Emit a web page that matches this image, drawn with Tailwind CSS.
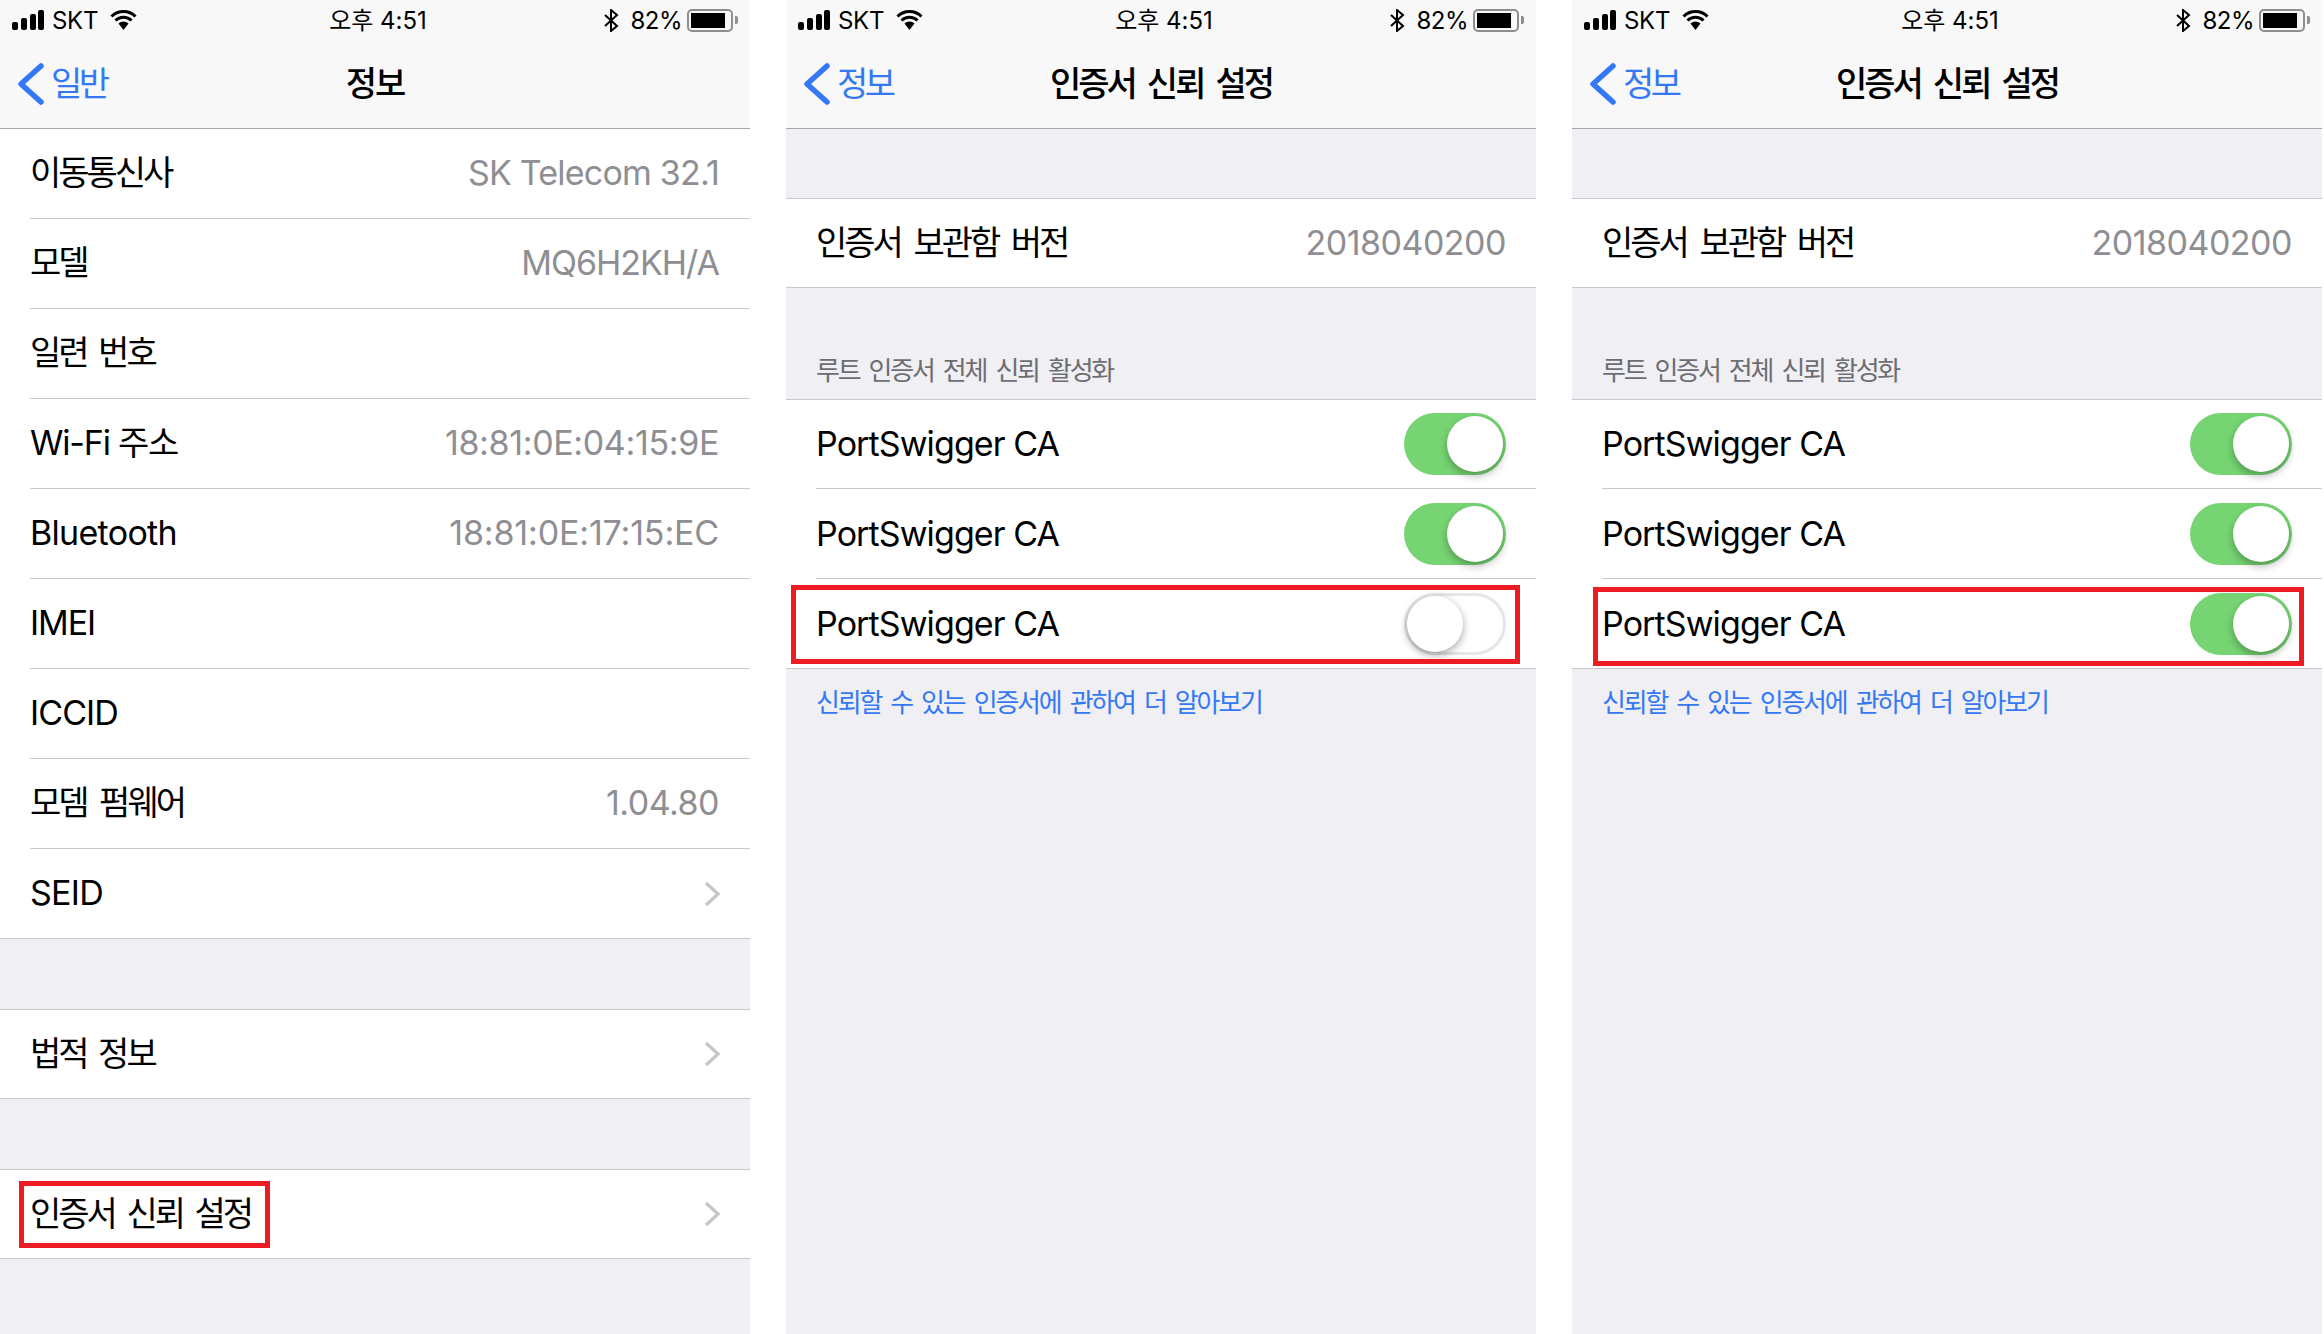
<!DOCTYPE html>
<html lang="ko">
<head>
<meta charset="UTF-8">
<title>인증서 신뢰 설정</title>
<script src="https://cdn.jsdelivr.net/npm/@tailwindcss/browser@4"></script>
</head>
<body class="bg-white font-[Inter,'Noto_Sans_CJK_KR',sans-serif] text-black overflow-hidden">
<div class="flex gap-[36px] h-[1334px]">

  <!-- 정보 -->
  <section class="w-[750px] bg-[#efeff4] flex flex-col">
    <header class="h-[129px] bg-[#f8f8f8] border-b border-[#a7a7aa] shrink-0">
      <div class="h-[40px] grid grid-cols-3 items-center pl-[12px] pr-[12px] text-[24px] leading-none">
        <div class="flex items-center">
          <svg width="34" height="20" viewBox="0 0 34 20" fill="#000"><rect x="0" y="12" width="6" height="8" rx="2"/><rect x="9" y="8" width="6" height="12" rx="2"/><rect x="18" y="4" width="6" height="16" rx="2"/><rect x="26" y="0" width="6" height="20" rx="2"/></svg>
          <span class="ml-[6px] pt-[2px] tracking-[-0.3px]">SKT</span>
          <svg class="ml-[12px]" width="27" height="20" viewBox="0 0 27 20"><path d="M1.5 6.5a17 17 0 0 1 24 0M5.5 10.5a11.5 11.5 0 0 1 16 0" fill="none" stroke="#000" stroke-width="3"/><path d="M8.5 13.5a7 7 0 0 1 10 0L13.5 20z" fill="#000"/></svg>
        </div>
        <div class="text-center pl-[6px] pt-[2px]">오후 4:51</div>
        <div class="flex items-center justify-end">
          <svg width="15" height="23" viewBox="0 0 15 23"><path d="M1 6l12 11-6 5V1l6 5L1 17" fill="none" stroke="#000" stroke-width="2"/></svg>
          <span class="ml-[11px] pt-[2px] tracking-[-0.5px]">82%</span>
          <div class="ml-[5px] w-[46px] h-[23px] border-2 border-[#8e8e8e] rounded-[5px] p-[2px]"><div class="w-[34px] h-full bg-black"></div></div>
          <div class="ml-[2px] w-[3px] h-[8px] bg-[#8e8e8e] rounded-r-[2px]"></div>
        </div>
      </div>
      <div class="h-[87px] grid grid-cols-[1fr_auto_1fr] items-center pl-[18px]">
        <div class="flex items-center text-[34px] text-[#3478f6]">
          <svg width="26" height="42" viewBox="0 0 26 42"><path d="M23 3L3 21l20 18" fill="none" stroke="#3478f6" stroke-width="5.5" stroke-linecap="round" stroke-linejoin="round"/></svg>
          <span class="ml-[7px] tracking-[-3.5px]">일반</span>
        </div>
        <h1 class="text-[34px] font-medium tracking-[-2px] pr-[18px]">정보</h1>
        <div></div>
      </div>
    </header>

    <div class="bg-white">
      <div class="h-[90px] pl-[30px] flex"><div class="flex-1 flex items-center justify-between pr-[31px] pb-[2px] border-b border-[#c8c7cc] text-[34px]"><span class="tracking-[-3px]">이동통신사</span><span class="text-[#8e8e93] tracking-[-0.8px]">SK Telecom 32.1</span></div></div>
      <div class="h-[90px] pl-[30px] flex"><div class="flex-1 flex items-center justify-between pr-[31px] pb-[2px] border-b border-[#c8c7cc] text-[34px]"><span class="tracking-[-3px]">모델</span><span class="text-[#8e8e93] tracking-[-1px]">MQ6H2KH/A</span></div></div>
      <div class="h-[90px] pl-[30px] flex"><div class="flex-1 flex items-center justify-between pr-[31px] pb-[2px] border-b border-[#c8c7cc] text-[34px]"><span class="tracking-[-3px] [word-spacing:5px]">일련 번호</span></div></div>
      <div class="h-[90px] pl-[30px] flex"><div class="flex-1 flex items-center justify-between pr-[31px] pb-[2px] border-b border-[#c8c7cc] text-[34px]"><span class="tracking-[-1.2px]">Wi-Fi 주소</span><span class="text-[#8e8e93] tracking-[-0.35px]">18:81:0E:04:15:9E</span></div></div>
      <div class="h-[90px] pl-[30px] flex"><div class="flex-1 flex items-center justify-between pr-[31px] pb-[2px] border-b border-[#c8c7cc] text-[34px]"><span class="tracking-[-0.7px]">Bluetooth</span><span class="text-[#8e8e93] tracking-[-0.15px]">18:81:0E:17:15:EC</span></div></div>
      <div class="h-[90px] pl-[30px] flex"><div class="flex-1 flex items-center justify-between pr-[31px] pb-[2px] border-b border-[#c8c7cc] text-[34px]"><span class="tracking-[-1.1px]">IMEI</span></div></div>
      <div class="h-[90px] pl-[30px] flex"><div class="flex-1 flex items-center justify-between pr-[31px] pb-[2px] border-b border-[#c8c7cc] text-[34px]"><span class="tracking-[-0.9px]">ICCID</span></div></div>
      <div class="h-[90px] pl-[30px] flex"><div class="flex-1 flex items-center justify-between pr-[31px] pb-[2px] border-b border-[#c8c7cc] text-[34px]"><span class="tracking-[-3px] [word-spacing:6px]">모뎀 펌웨어</span><span class="text-[#8e8e93] tracking-[-0.5px]">1.04.80</span></div></div>
      <div class="h-[90px] pl-[30px] flex items-center justify-between pr-[30px] border-b border-[#c8c7cc] text-[34px]"><span class="tracking-[-0.7px] pb-[2px]">SEID</span>
        <svg width="16" height="26" viewBox="0 0 16 26"><path d="M2 2l12 11L2 24" fill="none" stroke="#c7c7cc" stroke-width="3.5"/></svg>
      </div>
    </div>

    <div class="h-[70px] shrink-0"></div>
    <div class="h-[90px] bg-white border-t border-b border-[#c8c7cc] pl-[30px] pr-[30px] flex items-center justify-between text-[34px]"><span class="tracking-[-3px] [word-spacing:5px] pb-[2px]">법적 정보</span>
      <svg width="16" height="26" viewBox="0 0 16 26"><path d="M2 2l12 11L2 24" fill="none" stroke="#c7c7cc" stroke-width="3.5"/></svg>
    </div>
    <div class="h-[70px] shrink-0"></div>
    <div class="relative h-[90px] bg-white border-t border-b border-[#c8c7cc] pl-[30px] pr-[30px] flex items-center justify-between text-[34px]"><span class="tracking-[-3px] [word-spacing:5px] pb-[2px]">인증서 신뢰 설정</span>
      <svg width="16" height="26" viewBox="0 0 16 26"><path d="M2 2l12 11L2 24" fill="none" stroke="#c7c7cc" stroke-width="3.5"/></svg>
      <div class="absolute left-[19px] top-[11px] w-[251px] h-[67px] border-[5px] border-[#ed1c24]"></div>
    </div>
  </section>

  <!-- 인증서 신뢰 설정 (해제) -->
  <section class="w-[750px] bg-[#efeff4] flex flex-col">
    <header class="h-[129px] bg-[#f8f8f8] border-b border-[#a7a7aa] shrink-0">
      <div class="h-[40px] grid grid-cols-3 items-center pl-[12px] pr-[12px] text-[24px] leading-none">
        <div class="flex items-center">
          <svg width="34" height="20" viewBox="0 0 34 20" fill="#000"><rect x="0" y="12" width="6" height="8" rx="2"/><rect x="9" y="8" width="6" height="12" rx="2"/><rect x="18" y="4" width="6" height="16" rx="2"/><rect x="26" y="0" width="6" height="20" rx="2"/></svg>
          <span class="ml-[6px] pt-[2px] tracking-[-0.3px]">SKT</span>
          <svg class="ml-[12px]" width="27" height="20" viewBox="0 0 27 20"><path d="M1.5 6.5a17 17 0 0 1 24 0M5.5 10.5a11.5 11.5 0 0 1 16 0" fill="none" stroke="#000" stroke-width="3"/><path d="M8.5 13.5a7 7 0 0 1 10 0L13.5 20z" fill="#000"/></svg>
        </div>
        <div class="text-center pl-[6px] pt-[2px]">오후 4:51</div>
        <div class="flex items-center justify-end">
          <svg width="15" height="23" viewBox="0 0 15 23"><path d="M1 6l12 11-6 5V1l6 5L1 17" fill="none" stroke="#000" stroke-width="2"/></svg>
          <span class="ml-[11px] pt-[2px] tracking-[-0.5px]">82%</span>
          <div class="ml-[5px] w-[46px] h-[23px] border-2 border-[#8e8e8e] rounded-[5px] p-[2px]"><div class="w-[34px] h-full bg-black"></div></div>
          <div class="ml-[2px] w-[3px] h-[8px] bg-[#8e8e8e] rounded-r-[2px]"></div>
        </div>
      </div>
      <div class="h-[87px] grid grid-cols-[1fr_auto_1fr] items-center pl-[18px]">
        <div class="flex items-center text-[34px] text-[#3478f6]">
          <svg width="26" height="42" viewBox="0 0 26 42"><path d="M23 3L3 21l20 18" fill="none" stroke="#3478f6" stroke-width="5.5" stroke-linecap="round" stroke-linejoin="round"/></svg>
          <span class="ml-[7px] tracking-[-3.5px]">정보</span>
        </div>
        <h1 class="text-[34px] font-medium tracking-[-3px] [word-spacing:6px] pr-[18px]">인증서 신뢰 설정</h1>
        <div></div>
      </div>
    </header>

    <div class="h-[69px] shrink-0"></div>
    <div class="h-[90px] bg-white border-t border-b border-[#c8c7cc] px-[30px] flex items-center justify-between text-[34px]"><span class="tracking-[-3px] [word-spacing:6px] pb-[2px]">인증서 보관함 버전</span><span class="text-[#8e8e93] tracking-[-0.5px] pb-[2px]">2018040200</span></div>
    <div class="h-[111px] shrink-0 flex items-end pl-[30px] pb-[10px] text-[26px] leading-[36px] text-[#6d6d72] tracking-[-2.2px] [word-spacing:4px]">루트 인증서 전체 신뢰 활성화</div>
    <div class="bg-white border-t border-b border-[#c8c7cc]">
      <div class="h-[89px] pl-[30px] flex"><div class="flex-1 flex items-center justify-between pr-[30px] border-b border-[#c8c7cc] text-[34px]"><span class="tracking-[-0.9px] pb-[2px]">PortSwigger CA</span>
        <div class="w-[102px] h-[62px] rounded-full bg-[#76d572] p-[3px] flex justify-end"><div class="w-[56px] h-[56px] rounded-full bg-white shadow-[0_4px_8px_rgba(0,0,0,0.3)]"></div></div></div></div>
      <div class="h-[90px] pl-[30px] flex"><div class="flex-1 flex items-center justify-between pr-[30px] border-b border-[#c8c7cc] text-[34px]"><span class="tracking-[-0.9px]">PortSwigger CA</span>
        <div class="w-[102px] h-[62px] rounded-full bg-[#76d572] p-[3px] flex justify-end"><div class="w-[56px] h-[56px] rounded-full bg-white shadow-[0_4px_8px_rgba(0,0,0,0.3)]"></div></div></div></div>
      <div class="relative h-[89px] px-[30px] flex items-center justify-between text-[34px]"><span class="tracking-[-0.9px]">PortSwigger CA</span>
        <div class="w-[102px] h-[62px] rounded-full bg-white border-[3px] border-[#e5e5ea] flex justify-start"><div class="w-[56px] h-[56px] rounded-full bg-white shadow-[0_3px_8px_rgba(0,0,0,0.35)]"></div></div>
        <div class="absolute left-[5px] top-[6px] w-[729px] h-[79px] border-[5px] border-[#ed1c24]"></div>
      </div>
    </div>
    <a class="block pl-[30px] pt-[16px] text-[26px] leading-[36px] text-[#3478f6] tracking-[-2.2px] [word-spacing:4px]">신뢰할 수 있는 인증서에 관하여 더 알아보기</a>
  </section>

  <!-- 인증서 신뢰 설정 (활성) -->
  <section class="w-[750px] bg-[#efeff4] flex flex-col">
    <header class="h-[129px] bg-[#f8f8f8] border-b border-[#a7a7aa] shrink-0">
      <div class="h-[40px] grid grid-cols-3 items-center pl-[12px] pr-[12px] text-[24px] leading-none">
        <div class="flex items-center">
          <svg width="34" height="20" viewBox="0 0 34 20" fill="#000"><rect x="0" y="12" width="6" height="8" rx="2"/><rect x="9" y="8" width="6" height="12" rx="2"/><rect x="18" y="4" width="6" height="16" rx="2"/><rect x="26" y="0" width="6" height="20" rx="2"/></svg>
          <span class="ml-[6px] pt-[2px] tracking-[-0.3px]">SKT</span>
          <svg class="ml-[12px]" width="27" height="20" viewBox="0 0 27 20"><path d="M1.5 6.5a17 17 0 0 1 24 0M5.5 10.5a11.5 11.5 0 0 1 16 0" fill="none" stroke="#000" stroke-width="3"/><path d="M8.5 13.5a7 7 0 0 1 10 0L13.5 20z" fill="#000"/></svg>
        </div>
        <div class="text-center pl-[6px] pt-[2px]">오후 4:51</div>
        <div class="flex items-center justify-end">
          <svg width="15" height="23" viewBox="0 0 15 23"><path d="M1 6l12 11-6 5V1l6 5L1 17" fill="none" stroke="#000" stroke-width="2"/></svg>
          <span class="ml-[11px] pt-[2px] tracking-[-0.5px]">82%</span>
          <div class="ml-[5px] w-[46px] h-[23px] border-2 border-[#8e8e8e] rounded-[5px] p-[2px]"><div class="w-[34px] h-full bg-black"></div></div>
          <div class="ml-[2px] w-[3px] h-[8px] bg-[#8e8e8e] rounded-r-[2px]"></div>
        </div>
      </div>
      <div class="h-[87px] grid grid-cols-[1fr_auto_1fr] items-center pl-[18px]">
        <div class="flex items-center text-[34px] text-[#3478f6]">
          <svg width="26" height="42" viewBox="0 0 26 42"><path d="M23 3L3 21l20 18" fill="none" stroke="#3478f6" stroke-width="5.5" stroke-linecap="round" stroke-linejoin="round"/></svg>
          <span class="ml-[7px] tracking-[-3.5px]">정보</span>
        </div>
        <h1 class="text-[34px] font-medium tracking-[-3px] [word-spacing:6px] pr-[18px]">인증서 신뢰 설정</h1>
        <div></div>
      </div>
    </header>

    <div class="h-[69px] shrink-0"></div>
    <div class="h-[90px] bg-white border-t border-b border-[#c8c7cc] px-[30px] flex items-center justify-between text-[34px]"><span class="tracking-[-3px] [word-spacing:6px] pb-[2px]">인증서 보관함 버전</span><span class="text-[#8e8e93] tracking-[-0.5px] pb-[2px]">2018040200</span></div>
    <div class="h-[111px] shrink-0 flex items-end pl-[30px] pb-[10px] text-[26px] leading-[36px] text-[#6d6d72] tracking-[-2.2px] [word-spacing:4px]">루트 인증서 전체 신뢰 활성화</div>
    <div class="bg-white border-t border-b border-[#c8c7cc]">
      <div class="h-[89px] pl-[30px] flex"><div class="flex-1 flex items-center justify-between pr-[30px] border-b border-[#c8c7cc] text-[34px]"><span class="tracking-[-0.9px] pb-[2px]">PortSwigger CA</span>
        <div class="w-[102px] h-[62px] rounded-full bg-[#76d572] p-[3px] flex justify-end"><div class="w-[56px] h-[56px] rounded-full bg-white shadow-[0_4px_8px_rgba(0,0,0,0.3)]"></div></div></div></div>
      <div class="h-[90px] pl-[30px] flex"><div class="flex-1 flex items-center justify-between pr-[30px] border-b border-[#c8c7cc] text-[34px]"><span class="tracking-[-0.9px]">PortSwigger CA</span>
        <div class="w-[102px] h-[62px] rounded-full bg-[#76d572] p-[3px] flex justify-end"><div class="w-[56px] h-[56px] rounded-full bg-white shadow-[0_4px_8px_rgba(0,0,0,0.3)]"></div></div></div></div>
      <div class="relative h-[89px] px-[30px] flex items-center justify-between text-[34px]"><span class="tracking-[-0.9px]">PortSwigger CA</span>
        <div class="w-[102px] h-[62px] rounded-full bg-[#76d572] p-[3px] flex justify-end"><div class="w-[56px] h-[56px] rounded-full bg-white shadow-[0_4px_8px_rgba(0,0,0,0.3)]"></div></div>
        <div class="absolute left-[21px] top-[8px] w-[711px] h-[79px] border-[5px] border-[#ed1c24]"></div>
      </div>
    </div>
    <a class="block pl-[30px] pt-[16px] text-[26px] leading-[36px] text-[#3478f6] tracking-[-2.2px] [word-spacing:4px]">신뢰할 수 있는 인증서에 관하여 더 알아보기</a>
  </section>
</div>
</body>
</html>
